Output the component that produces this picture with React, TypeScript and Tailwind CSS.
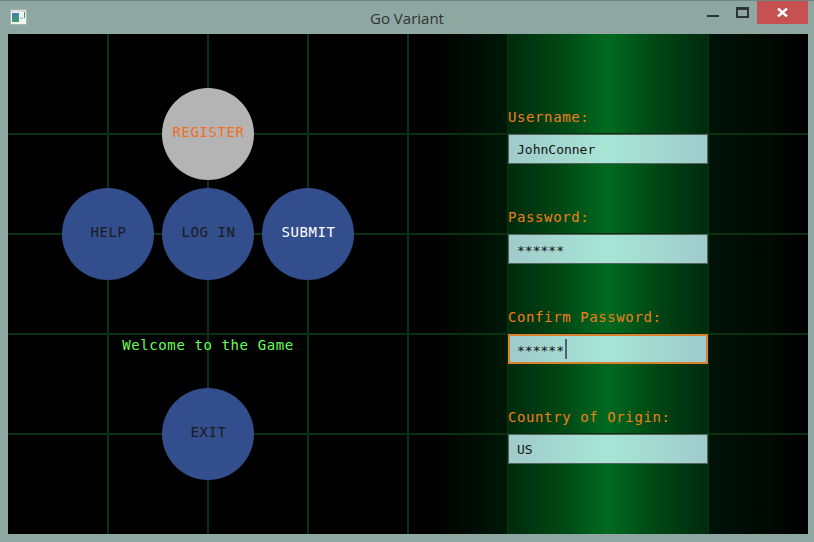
import React from "react";

const mono = "font-['DejaVu_Sans_Mono',monospace]";

function Circle({
  label,
  bg,
  text,
}: {
  label: string;
  bg: string;
  text: string;
}) {
  return (
    <div
      className={`w-[92px] h-[92px] rounded-full flex items-center justify-center text-[14px] tracking-[0.6px] leading-[17px] ${mono} ${bg} ${text}`}
    >
      <span className="pl-[1px] pb-[4px]">{label}</span>
    </div>
  );
}

function Field({
  label,
  value,
  focused,
  secret,
}: {
  label: string;
  value: string;
  focused?: boolean;
  secret?: boolean;
}) {
  return (
    <div className="flex flex-col">
      <div className={`text-[14px] leading-[17px] tracking-[0.6px] text-[#f07f1a] ${mono}`}>{label}</div>
      <div
        className={`mt-2 w-[200px] h-[30px] flex items-center bg-[linear-gradient(to_right,#a0cbcb,#a7e5d4_50%,#a0cbcb)] ${
          focused ? "border-2 border-[#d8822e] pl-[7px]" : "border border-[#55645a] pl-[8px]"
        }`}
      >
        <span
          className={`text-[13px] leading-[16px] text-[#141414] ${mono} ${secret ? "pt-[4px]" : "pt-[2px]"}`}
        >
          {value}
        </span>
        {focused && <span className="ml-[1px] w-[2px] h-[20px] bg-[#4f5f7c]" />}
      </div>
    </div>
  );
}

export default function App() {
  return (
    <div className="w-[814px] h-[542px] bg-[#8fa7a1] border-t border-[#6f8682] flex flex-col overflow-hidden">
      {/* Title bar */}
      <div className="h-[33px] grid grid-cols-[1fr_auto_1fr] items-start">
        <div className="pl-[10px] pt-[8px]">
          <svg width="17" height="16" viewBox="0 0 17 16">
            <rect x="0.5" y="0.5" width="16" height="15" fill="#f1f4f4" stroke="#a9b3b3" />
            <rect x="1" y="1" width="15" height="2" fill="#d9dfe0" />
            <defs>
              <linearGradient id="ic" x1="0" y1="0" x2="0" y2="1">
                <stop offset="0" stopColor="#3f7fb0" />
                <stop offset="1" stopColor="#3fa060" />
              </linearGradient>
            </defs>
            <rect x="2" y="4" width="7" height="9" fill="url(#ic)" />
            <rect x="10" y="8" width="3" height="2" fill="#c2c8c8" />
            <rect x="14" y="3" width="1" height="6" fill="#3aa04a" />
          </svg>
        </div>
        <div className="pt-[7px] text-[15px] leading-[20px] text-[#2e3333] font-['Open_Sans','Noto_Sans',sans-serif]">
          Go Variant
        </div>
        <div className="flex justify-end items-start pr-[6px]">
          <div className="w-[29px] h-[23px] pl-[8px] pt-[14px]">
            <div className="w-[12px] h-[2px] bg-[#2f3535]" />
          </div>
          <div className="w-[29px] h-[23px] pl-[8px] pt-[6px]">
            <div className="w-[13px] h-[11px] border-2 border-t-[3px] border-[#2f3535]" />
          </div>
          <div className="w-[51px] h-[23px] bg-[#c75050] flex items-center justify-center">
            <svg width="11" height="9" viewBox="0 0 11 9">
              <path d="M1 0.5 L10 8.5 M10 0.5 L1 8.5" stroke="#fff" strokeWidth="2.4" />
            </svg>
          </div>
        </div>
      </div>

      {/* Content */}
      <div
        className="ml-[8px] w-[800px] h-[500px] bg-black flex [background-image:linear-gradient(to_right,transparent_99px,#083210_99px,#083210_101px,transparent_101px,transparent_199px,#083210_199px,#083210_201px,transparent_201px,transparent_299px,#083210_299px,#083210_301px,transparent_301px,transparent_399px,#083210_399px,#083210_401px,transparent_401px,transparent_499px,#06300e_499px,#06300e_501px,transparent_501px,transparent_699px,#06300e_699px,#06300e_701px,transparent_701px),linear-gradient(to_bottom,transparent_99px,#083210_99px,#083210_101px,transparent_101px,transparent_199px,#083210_199px,#083210_201px,transparent_201px,transparent_299px,#083210_299px,#083210_301px,transparent_301px,transparent_399px,#083210_399px,#083210_401px,transparent_401px),linear-gradient(to_right,#000_0px,#000_425px,#000c04_465px,#001808_499px,#002a0d_501px,#004513_550px,#006a1f_600px,#004513_650px,#002a0d_699px,#001207_701px,#000904_760px,#000_795px)]"
      >
        {/* Left: buttons */}
        <div className="w-[400px] flex flex-col items-center pt-[54px]">
          <Circle label="REGISTER" bg="bg-[#b4b4b4]" text="text-[#f56c1c]" />
          <div className="mt-[8px] flex gap-[8px]">
            <Circle label="HELP" bg="bg-[#334e8c]" text="text-[#1a1a22]" />
            <Circle label="LOG IN" bg="bg-[#334e8c]" text="text-[#1a1a22]" />
            <Circle label="SUBMIT" bg="bg-[#334e8c]" text="text-white" />
          </div>
          <div className={`mt-[57px] text-[14px] leading-[17px] tracking-[0.6px] text-[#66ff5a] ${mono}`}>
            Welcome to the Game
          </div>
          <div className="mt-[34px]">
            <Circle label="EXIT" bg="bg-[#334e8c]" text="text-[#1a1a22]" />
          </div>
        </div>

        {/* Right: form */}
        <div className="pl-[100px] pt-[75px] flex flex-col gap-[45px]">
          <Field label="Username:" value="JohnConner" />
          <Field label="Password:" value="******" secret />
          <Field label="Confirm Password:" value="******" focused secret />
          <Field label="Country of Origin:" value="US" />
        </div>
      </div>
    </div>
  );
}
